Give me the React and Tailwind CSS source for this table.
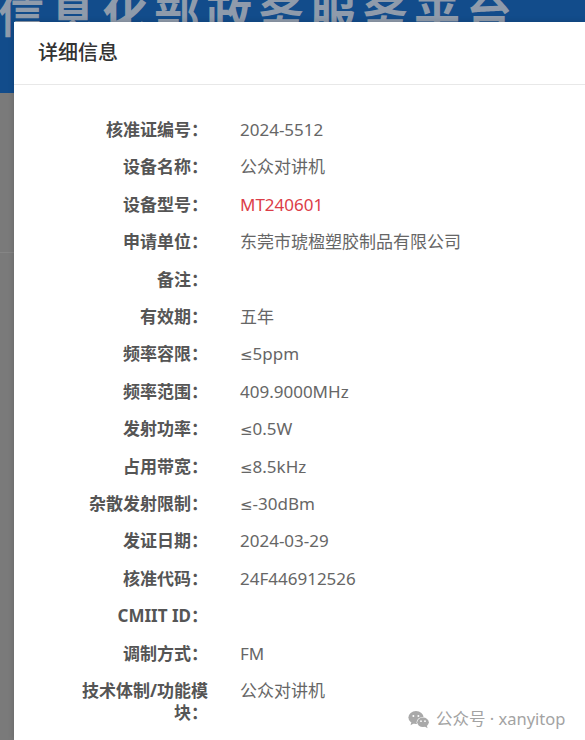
import React from 'react';

const rows = [
  { label: '核准证编号：', value: '2024-5512' },
  { label: '设备名称：', value: '公众对讲机' },
  { label: '设备型号：', value: 'MT240601', red: true },
  { label: '申请单位：', value: '东莞市琥楹塑胶制品有限公司' },
  { label: '备注：', value: '' },
  { label: '有效期：', value: '五年' },
  { label: '频率容限：', value: '≤5ppm' },
  { label: '频率范围：', value: '409.9000MHz' },
  { label: '发射功率：', value: '≤0.5W' },
  { label: '占用带宽：', value: '≤8.5kHz' },
  { label: '杂散发射限制：', value: '≤-30dBm' },
  { label: '发证日期：', value: '2024-03-29' },
  { label: '核准代码：', value: '24F446912526' },
  { label: 'CMIIT ID：', value: '' },
  { label: '调制方式：', value: 'FM' },
  { label: '技术体制/功能模块：', value: '公众对讲机' },
];

// the CJK font draws ≤ slanted, so give the sign a latin face
function Value({ text }) {
  if (!text.startsWith('≤')) return text;
  return (
    <>
      <span style={{ fontFamily: '"DejaVu Sans", sans-serif' }} className="text-[15px] leading-[0]">≤</span>
      {text.slice(1)}
    </>
  );
}

function WeChatIcon() {
  return (
    <svg width="22" height="19" viewBox="0 0 22 19">
      <ellipse cx="8" cy="7.5" rx="7.6" ry="6.4" fill="#a9a9a9" />
      <path d="M3.2 12.2 L2.6 15.2 L6 13.2 Z" fill="#a9a9a9" />
      <circle cx="5.4" cy="6" r="1" fill="#fff" />
      <circle cx="10.4" cy="6" r="1" fill="#fff" />
      <ellipse cx="15" cy="12.3" rx="6.4" ry="5.3" fill="#fff" />
      <ellipse cx="15" cy="12.3" rx="5.8" ry="4.8" fill="#a9a9a9" />
      <path d="M18.8 15.6 L19.6 18.2 L16.6 16.6 Z" fill="#a9a9a9" />
      <circle cx="13" cy="11.2" r="0.85" fill="#fff" />
      <circle cx="17" cy="11.2" r="0.85" fill="#fff" />
    </svg>
  );
}

export default function App() {
  return (
    <div
      className="relative w-[585px] h-[740px] overflow-hidden bg-[#7a7a7a]"
      style={{ fontFamily: '"Noto Sans", "Noto Sans CJK SC", sans-serif' }}
    >
      {/* page behind the dialog */}
      <div className="h-[93px] bg-[#124c8b] overflow-hidden">
        <div className="-mt-[9px] ml-[-158px] whitespace-nowrap text-[46px] leading-none font-bold tracking-[6px] text-[#8f9bab]">
          工业和信息化部政务服务平台
        </div>
      </div>
      <div className="h-[160px] border-b border-[#858585]" />

      {/* dialog */}
      <div className="absolute left-[14px] top-[22px] right-0 bottom-0 bg-white shadow-[0_0_6px_rgba(0,0,0,0.18)]">
        <div className="h-[63px] flex items-center pl-[24px] border-b border-[#e8e8e8]">
          <span className="text-[20px] font-medium text-[#333]">详细信息</span>
        </div>
        <div className="pt-[26px] pl-[64px]">
          {rows.map((r) => (
            <div key={r.label} className="flex py-[8px] text-[17px] leading-[21.4px]">
              <div className="w-[130px] shrink-0 text-right font-bold text-[#555]">{r.label}</div>
              <div className={r.red ? 'ml-[32px] h-[21.4px] text-[#dc3d48]' : 'ml-[32px] h-[21.4px] text-[#666]'}>
                <Value text={r.value} />
              </div>
            </div>
          ))}
        </div>
      </div>

      {/* watermark */}
      <div className="absolute left-[408px] top-[707px] flex items-center gap-[6px] text-[16.5px] text-[#a3a3a3]">
        <WeChatIcon />
        <span>公众号 · xanyitop</span>
      </div>
    </div>
  );
}
